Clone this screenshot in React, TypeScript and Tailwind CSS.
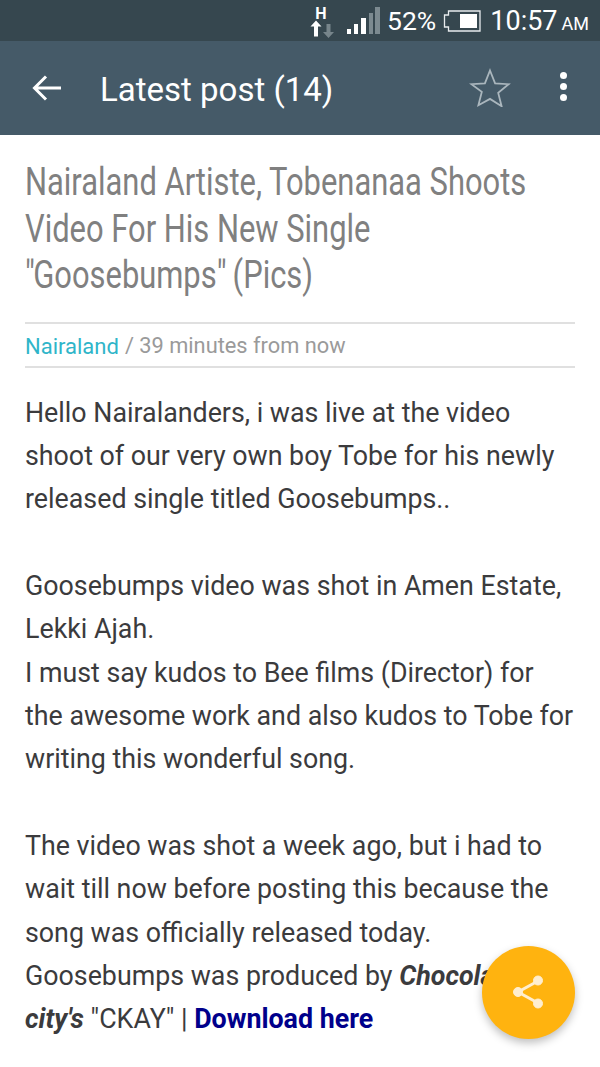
import { FC } from "react";

const StatusBar: FC = () => (
  <div className="flex h-[41px] items-center justify-end bg-[#36474f] pr-[11px] text-white">
    {/* network type + arrows */}
    <svg width="26" height="36" viewBox="0 0 26 36" className="mr-[12px]">
      <text x="12" y="16" fontSize="16" fontWeight="700" fill="#fff" textAnchor="middle" fontFamily="Roboto, sans-serif">H</text>
      <path d="M7 17.500l5.500 6h-3.500v10h-4v-10h-3.500z" fill="#fff" />
      <path d="M19.500 35l5.500-6h-3.500v-8h-4v8h-3.500z" fill="#77858b" />
    </svg>
    {/* signal */}
    <svg width="33" height="28" viewBox="0 0 33 28" className="mr-[7px] mt-[1px]">
      <rect x="0" y="22" width="4" height="5" fill="#fff" />
      <rect x="7" y="17" width="4" height="10" fill="#fff" />
      <rect x="14" y="11" width="5" height="16" fill="#fff" />
      <rect x="22" y="6" width="4" height="21" fill="#7c8a90" />
      <rect x="28" y="0" width="5" height="27" fill="#7c8a90" />
    </svg>
    <span className="mr-[7px] mt-[2px] font-['Roboto',sans-serif] text-[26.500px] leading-none">52%</span>
    {/* battery */}
    <svg width="38" height="22" viewBox="0 0 38 22" className="mr-[9px]">
      <path d="M5.500 1h31.500v20h-31.500v-4h-4v-12h4z" fill="none" stroke="#e8ecee" strokeWidth="1.300" />
      <rect x="17" y="4" width="17" height="14" fill="#fff" />
    </svg>
    <span className="mt-[2px] font-['Roboto',sans-serif] text-[27px] leading-none">10:57</span>
    <span className="ml-[4px] mt-[6px] font-['Roboto',sans-serif] text-[18px] leading-none">AM</span>
  </div>
);

const Toolbar: FC = () => (
  <div className="flex h-[94px] items-center bg-[#455a68] text-white">
    <svg width="30" height="28" viewBox="0 0 30 28" className="ml-[32px] mb-[1px]" fill="none" stroke="#fff" strokeWidth="3">
      <path d="M29 14H3M14 2.500L2.500 14 14 25.500" />
    </svg>
    <span className="ml-[38px] mt-[3px] flex-1 font-['Roboto',sans-serif] text-[33px] leading-none">Latest post (14)</span>
    <svg width="42" height="40" viewBox="0 0 42 40" className="mr-[49px] mb-[3px]" fill="none" stroke="#aab6bd" strokeWidth="1.800">
      <path d="M21 3.500l5.100 12.800 13.500.9-10.400 8.700 3.400 13.300L21 31.900 9.400 38.200l3.400-13.300L2.400 17.200l13.500-.9z" />
    </svg>
    <div className="mr-[33px] mb-[3px] flex flex-col gap-[4px]">
      <div className="h-[7px] w-[7px] rounded-full bg-white" />
      <div className="h-[7px] w-[7px] rounded-full bg-white" />
      <div className="h-[7px] w-[7px] rounded-full bg-white" />
    </div>
  </div>
);

const bodyFont = "font-['Roboto',sans-serif] text-[26.800px] leading-[43.350px] text-[#3b3b3d]";

export default function App() {
  return (
    <div className="relative h-[1067px] w-[600px] overflow-hidden bg-white">
      <StatusBar />
      <Toolbar />

      <div className="px-[25px]">
        <h1 className="mt-[24px] w-[680px] origin-left scale-x-[0.813] font-['Roboto',sans-serif] text-[38px] font-normal leading-[46.500px] text-[#808080]">
          Nairaland Artiste, Tobenanaa Shoots
          <br />
          Video For His New Single
          <br />
          <span className="tracking-[-2px]">"</span>Goosebumps<span className="tracking-[-2px]">"</span> (Pics)
        </h1>

        <div className="mt-[23px] flex h-[46px] items-center border-y-2 border-[#e0e0e0] pt-[3px] font-['Roboto',sans-serif] text-[21.800px] text-[#9a9a9a]">
          <span className="text-[22px] text-[#2fb5c9]">Nairaland</span>
          <span className="ml-[6px]">/ 39 minutes from now</span>
        </div>

        <div className={`mt-[24px] w-[560px] ${bodyFont}`}>
          Hello Nairalanders, i was live at the video
          <br />
          shoot of our very own boy Tobe for his newly
          <br />
          released single titled Goosebumps..
          <br />
          <br />
          Goosebumps video was shot in Amen Estate,
          <br />
          Lekki Ajah.
          <br />
          I must say kudos to Bee films (Director) for
          <br />
          the awesome work and also kudos to Tobe for
          <br />
          writing this wonderful song.
          <br />
          <br />
          The video was shot a week ago, but i had to
          <br />
          wait till now before posting this because the
          <br />
          song was officially released today.
          <br />
          Goosebumps was produced by <b className="italic">Chocolate</b>
          <br />
          <b className="italic">city's</b> "CKAY" | <b className="text-[#00008b]">Download here</b>
        </div>
      </div>

      {/* share button */}
      <div className="absolute left-[482px] top-[946px] flex h-[93px] w-[93px] items-center justify-center rounded-full bg-[#ffb30f] shadow-[0_4px_8px_rgba(0,0,0,0.25)]">
        <svg width="34" height="36" viewBox="0 0 34 36" fill="#ffeecf" stroke="#ffeecf" className="mb-[2px]">
          <path d="M26 7L6 18l20 11" fill="none" strokeWidth="3" />
          <circle cx="26" cy="6.500" r="4.500" />
          <circle cx="6" cy="18" r="4.500" />
          <circle cx="26" cy="29.500" r="4.500" />
        </svg>
      </div>
    </div>
  );
}
